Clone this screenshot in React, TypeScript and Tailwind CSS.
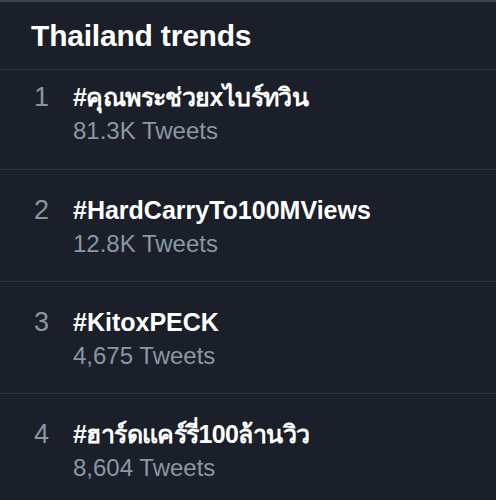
const trends = [
  { rank: 1, tag: '#คุณพระช่วยxไบร์ทวิน', count: '81.3K Tweets', thai: true },
  { rank: 2, tag: '#HardCarryTo100MViews', count: '12.8K Tweets', thai: false },
  { rank: 3, tag: '#KitoxPECK', count: '4,675 Tweets', thai: false },
  { rank: 4, tag: '#ฮาร์ดแคร์รี่100ล้านวิว', count: '8,604 Tweets', thai: true },
];

export default function App(): JSX.Element {
  return (
    <div
      className="w-[496px] h-[500px] overflow-hidden bg-[#1a1f29] border-t-2 border-[#3a414b] text-white"
      style={{ fontFamily: '"Liberation Sans", "Noto Sans", sans-serif' }}
    >
      <div className="h-[68px] pl-[31px] flex items-center border-b border-[#2c333d]">
        <h1 className="text-[30px] font-bold leading-[36px] tracking-[-0.2px]">Thailand trends</h1>
      </div>
      {trends.map((t, i) => (
        <div
          key={t.rank}
          className={
            i === 0
              ? 'h-[100px] flex pt-[12px] border-b border-[#2c333d]'
              : 'h-[112px] flex pt-[25px] border-b border-[#2c333d]'
          }
        >
          <div className="w-[49px] text-right text-[27px] leading-[30px] text-[#8a96a3]">{t.rank}</div>
          <div className="pl-[24px]">
            <div
              className={
                t.thai
                  ? 'text-[25px] font-bold leading-[30px] tracking-[-0.6px]'
                  : 'text-[25px] font-bold leading-[30px]'
              }
            >
              {t.tag}
            </div>
            <div className="mt-[4px] text-[24px] leading-[30px] text-[#8b97a4]">{t.count}</div>
          </div>
        </div>
      ))}
    </div>
  );
}
